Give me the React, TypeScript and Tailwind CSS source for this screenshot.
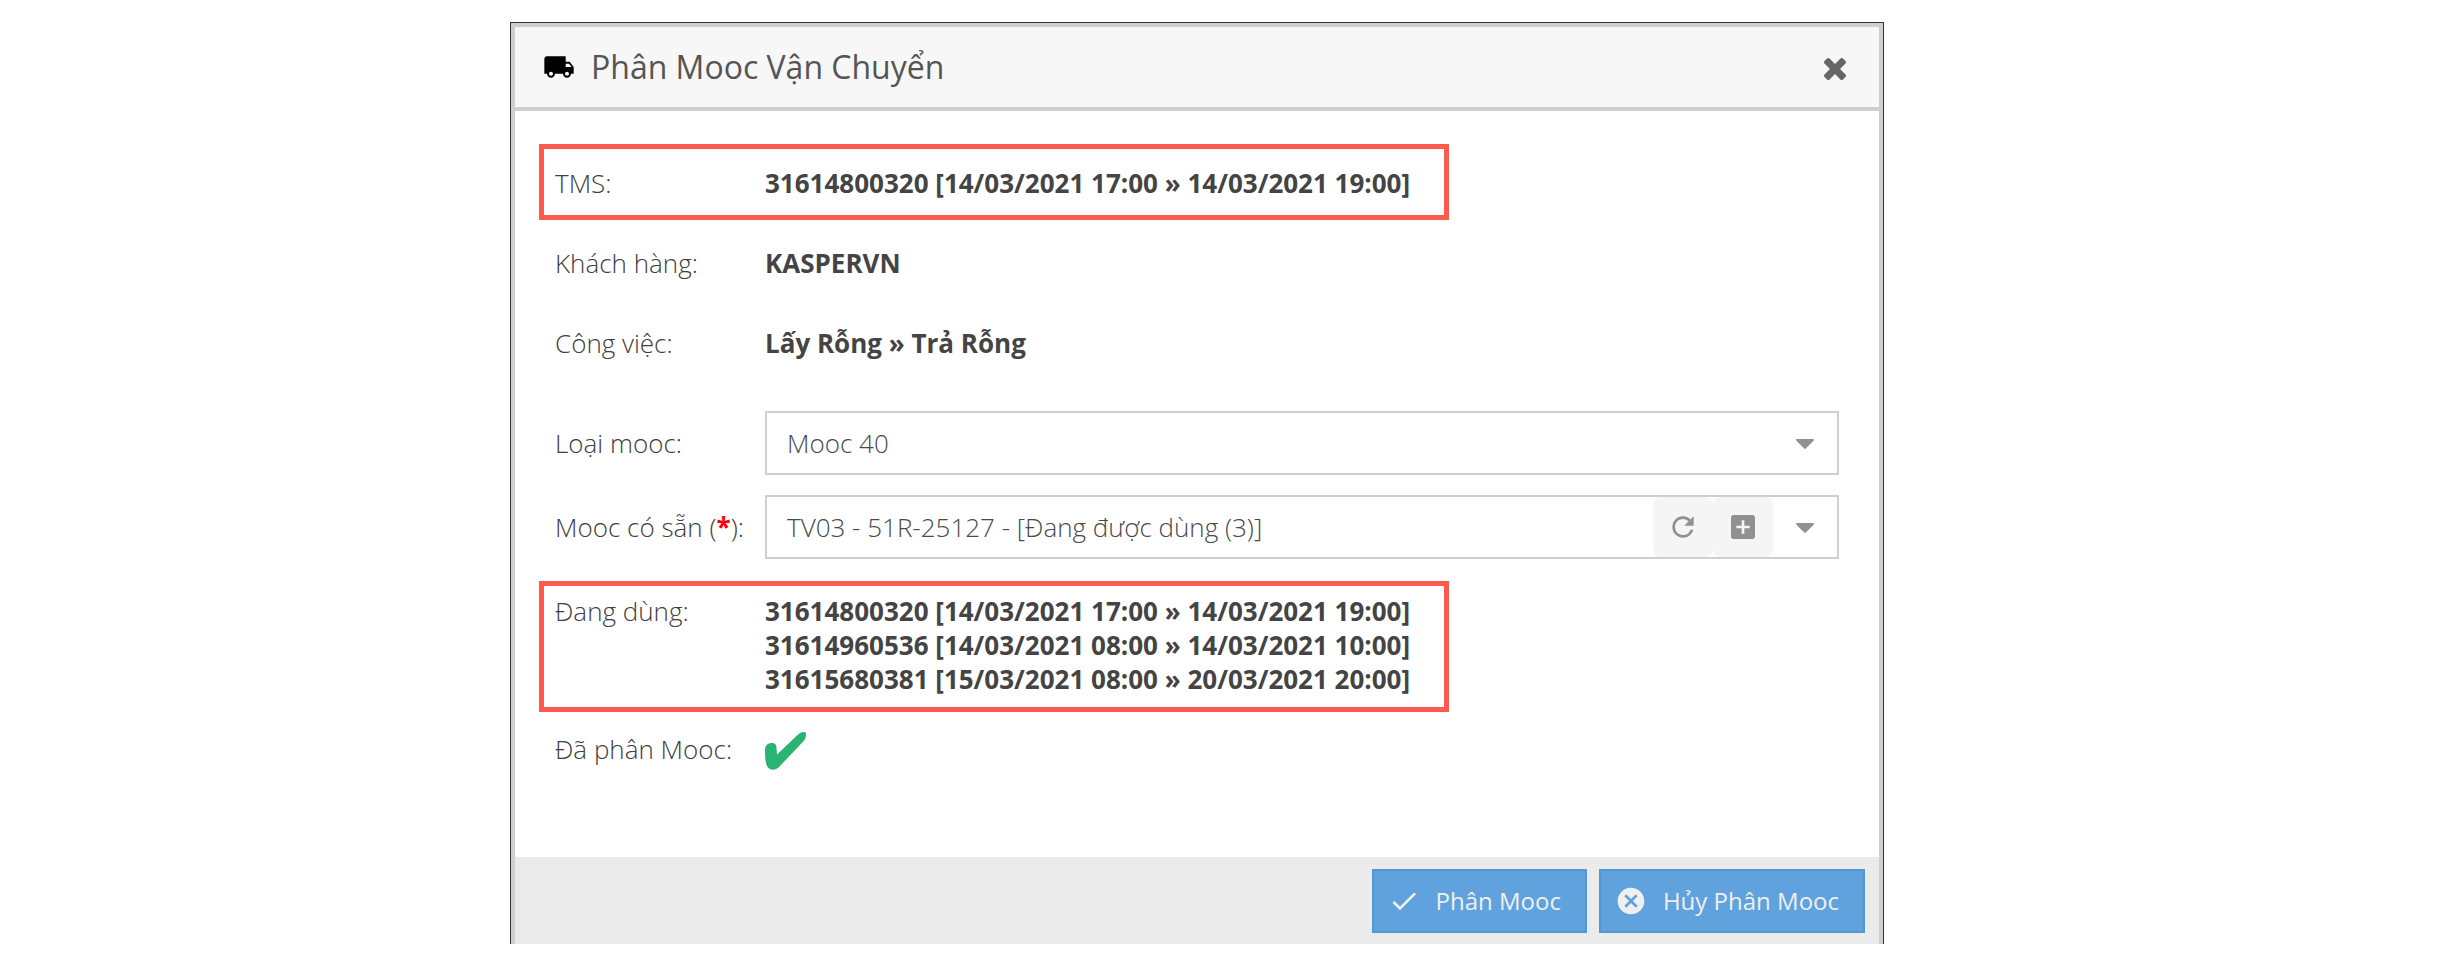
import React from "react";
import {
  MdAddBox,
  MdCancel,
  MdCheck,
  MdLocalShipping,
  MdRefresh,
} from "react-icons/md";

const LABEL = "w-[210px] shrink-0 whitespace-nowrap";
const SELECT =
  "h-full min-w-0 flex-1 appearance-none bg-transparent pl-5 font-light text-[#4a4a4a] outline-none";

function CloseIcon() {
  return (
    <svg viewBox="302 366 1188 1188" className="size-[22px]" fill="currentColor" aria-hidden="true">
      <path d="M1490 1322q0 40-28 68l-136 136q-28 28-68 28t-68-28l-294-294-294 294q-28 28-68 28t-68-28l-136-136q-28-28-28-68t28-68l294-294-294-294q-28-28-28-68t28-68l136-136q28-28 68-28t68 28l294 294 294-294q28-28 68-28t68 28l136 136q28 28 28 68t-28 68l-294 294 294 294q28 28 28 68z" />
    </svg>
  );
}

function Caret() {
  return (
    <span className="pointer-events-none flex w-16 shrink-0 items-center justify-center pt-0.5">
      <svg viewBox="0 0 18 10" className="h-[10px] w-[18px]" fill="#919191" aria-hidden="true">
        <path d="M1 0h16q1 0 1 .8 0 .5-.4.9L9.8 9.6q-.8.7-1.6 0L.4 1.700Q0 1.300 0 .8 0 0 1 0z" />
      </svg>
    </span>
  );
}

function HeavyCheck() {
  return (
    <svg viewBox="0 0 42 38" className="h-[38px] w-[42px]" fill="#29b473" role="img" aria-label="Đã phân">
      <path d="M0 18c0-4.500 3-7 7-7 3 0 4.300 1.500 4.500 4.500l.5 7L33 2.500C35 .8 37 0 39 0c1.600 0 2.200 1 2 3-.2 3-1.200 5-3.200 7L15 34c-2.500 2.600-4.500 3.800-7 3.800-3 0-5.200-1.800-6.500-4.800C.3 29 0 24 0 18z" />
    </svg>
  );
}

function Row({ label, className, children }: { label: string; className: string; children: React.ReactNode }) {
  return (
    <div className={`flex ${className}`}>
      <dt className={LABEL}>{label}</dt>
      <dd className="font-bold text-[#444]">{children}</dd>
    </div>
  );
}

const USAGES = [
  "31614800320 [14/03/2021 17:00 » 14/03/2021 19:00]",
  "31614960536 [14/03/2021 08:00 » 14/03/2021 10:00]",
  "31615680381 [15/03/2021 08:00 » 20/03/2021 20:00]",
];

const HIGHLIGHT = "-ml-4 w-[910px] max-w-full border-[5px] border-[#ff5a4d] pl-[11px]";
const TOOL = "flex size-[60px] shrink-0 items-center justify-center rounded-lg bg-[#f5f5f5] text-[#919191]";
const ACTION =
  "flex h-16 items-center gap-4 border-2 border-[#5498d3] bg-[#5fa2dd] pr-6 pl-[14px] text-2xl font-normal text-[#efefef]";

export default function App() {
  return (
    <main className="bg-white pt-[22px] pr-12 font-['Open_Sans',sans-serif] text-[26px] leading-[34px] font-light text-[#404040]">
      <section
        role="dialog"
        aria-labelledby="dialog-title"
        className="mx-auto max-w-[1374px] border border-b-0 border-[#333]"
      >
        <div className="border-4 border-b-0 border-[#cfcfcf]">
          <header className="flex h-21 items-center border-b-4 border-[#cfcfcf] bg-[#f7f7f7] pr-[33px] pl-7">
            <MdLocalShipping className="size-8 text-black" />
            <h1 id="dialog-title" className="ml-4 flex-1 text-[32px] leading-12 font-normal text-[#555]">
              Phân Mooc Vận Chuyển
            </h1>
            <button type="button" aria-label="Đóng" className="pt-1 text-[#666]">
              <CloseIcon />
            </button>
          </header>

          <div className="px-10 pt-[33px] pb-[87px]">
            <dl>
              <Row label="TMS:" className={`${HIGHLIGHT} pt-[17px] pb-[15px]`}>
                {USAGES[0]}
              </Row>
              <Row label="Khách hàng:" className="mt-[26px]">
                KASPERVN
              </Row>
              <Row label="Công việc:" className="mt-[46px]">
                Lấy Rỗng » Trả Rỗng
              </Row>
            </dl>

            <div className="mt-[51px] flex items-center">
              <label htmlFor="kind" className={LABEL}>
                Loại mooc:
              </label>
              <div className="flex h-16 flex-1 border-2 border-[#cfcfcf]">
                <select id="kind" className={SELECT}>
                  <option>Mooc 40</option>
                </select>
                <Caret />
              </div>
            </div>
            <div className="mt-5 flex items-center">
              <label htmlFor="trailer" className={LABEL}>
                Mooc có sẵn (<span className="font-bold text-[#f00]">*</span>):
              </label>
              <div className="flex h-16 flex-1 border-2 border-[#cfcfcf]">
                <select id="trailer" className={SELECT}>
                  <option>TV03 - 51R-25127 - [Đang được dùng (3)]</option>
                </select>
                <button type="button" aria-label="Tải lại" className={TOOL}>
                  <MdRefresh className="size-8" />
                </button>
                <button type="button" aria-label="Thêm" className={TOOL}>
                  <MdAddBox className="size-8" />
                </button>
                <Caret />
              </div>
            </div>

            <dl>
              <Row label="Đang dùng:" className={`${HIGHLIGHT} mt-[22px] pt-2 pb-[11px]`}>
                {USAGES.map((usage) => (
                  <p key={usage}>{usage}</p>
                ))}
              </Row>
              <Row label="Đã phân Mooc:" className="mt-5">
                <HeavyCheck />
              </Row>
            </dl>
          </div>

          <footer className="flex justify-end gap-3 bg-[#ebebeb] pt-3 pr-[14px] pb-[11px]">
            <button type="button" className={ACTION}>
              <MdCheck className="size-8" />
              Phân Mooc
            </button>
            <button type="button" className={ACTION}>
              <MdCancel className="size-8" />
              Hủy Phân Mooc
            </button>
          </footer>
        </div>
      </section>
    </main>
  );
}
